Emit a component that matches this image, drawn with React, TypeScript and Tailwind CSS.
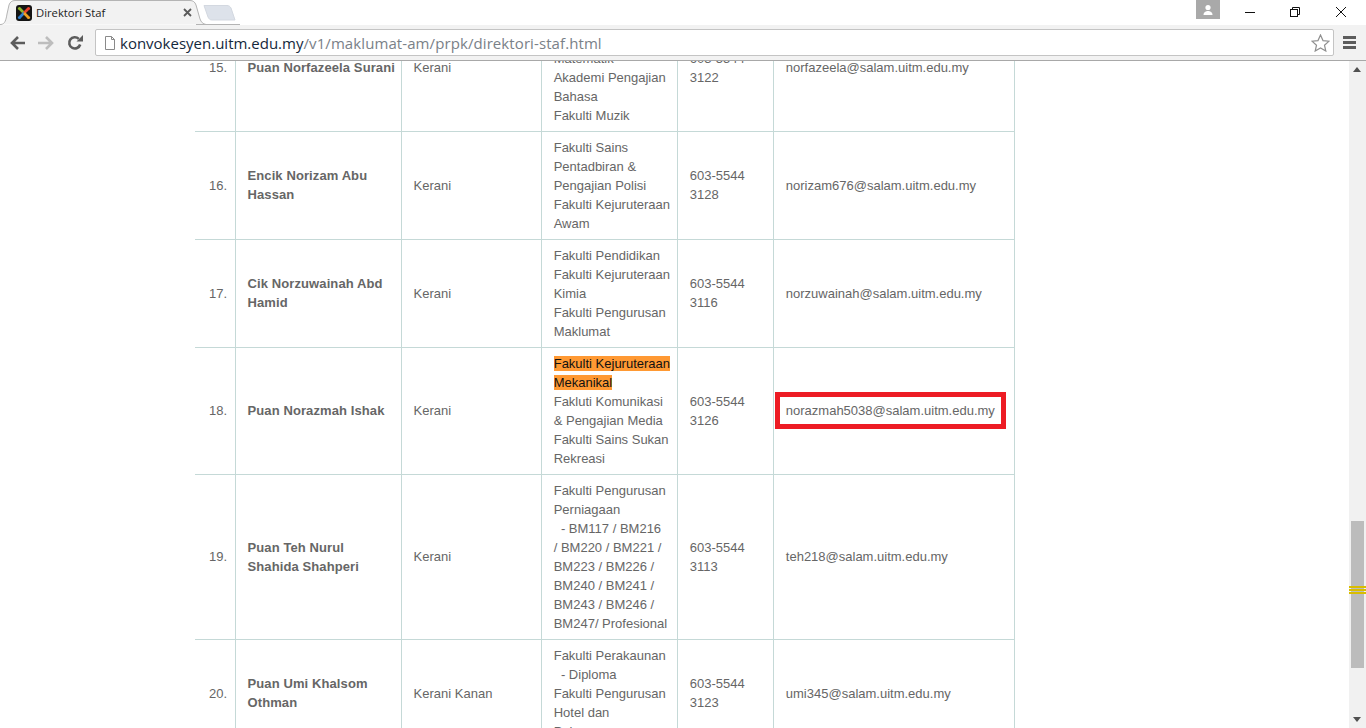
import React from "react";

// Directory rows, in the order they sit on the page.
const rows: {
  no: string;
  name: string[];
  role: string;
  faculty: React.ReactNode[];
  phone: string[];
  email: string;
  boxed?: boolean;
}[] = [
  {
    no: "15.",
    name: ["Puan Norfazeela Surani"],
    role: "Kerani",
    faculty: ["Fakulti Sains", "Komputer &", "Matematik", "Akademi Pengajian", "Bahasa", "Fakulti Muzik"],
    phone: ["603-5544", "3122"],
    email: "norfazeela@salam.uitm.edu.my",
  },
  {
    no: "16.",
    name: ["Encik Norizam Abu", "Hassan"],
    role: "Kerani",
    faculty: ["Fakulti Sains", "Pentadbiran &", "Pengajian Polisi", "Fakulti Kejuruteraan", "Awam"],
    phone: ["603-5544", "3128"],
    email: "norizam676@salam.uitm.edu.my",
  },
  {
    no: "17.",
    name: ["Cik Norzuwainah Abd", "Hamid"],
    role: "Kerani",
    faculty: ["Fakulti Pendidikan", "Fakulti Kejuruteraan", "Kimia", "Fakulti Pengurusan", "Maklumat"],
    phone: ["603-5544", "3116"],
    email: "norzuwainah@salam.uitm.edu.my",
  },
  {
    no: "18.",
    name: ["Puan Norazmah Ishak"],
    role: "Kerani",
    faculty: [
      <span className="bg-[#ff9933] text-[#111]">Fakulti Kejuruteraan</span>,
      <span className="bg-[#ff9933] text-[#111]">Mekanikal</span>,
      "Fakluti Komunikasi",
      "& Pengajian Media",
      "Fakulti Sains Sukan",
      "Rekreasi",
    ],
    phone: ["603-5544", "3126"],
    email: "norazmah5038@salam.uitm.edu.my",
    boxed: true,
  },
  {
    no: "19.",
    name: ["Puan Teh Nurul", "Shahida Shahperi"],
    role: "Kerani",
    faculty: [
      "Fakulti Pengurusan",
      "Perniagaan",
      "\u00a0\u00a0- BM117 / BM216",
      "/ BM220 / BM221 /",
      "BM223 / BM226 /",
      "BM240 / BM241 /",
      "BM243 / BM246 /",
      "BM247/ Profesional",
    ],
    phone: ["603-5544", "3113"],
    email: "teh218@salam.uitm.edu.my",
  },
  {
    no: "20.",
    name: ["Puan Umi Khalsom", "Othman"],
    role: "Kerani Kanan",
    faculty: ["Fakulti Perakaunan", "\u00a0\u00a0- Diploma", "Fakulti Pengurusan", "Hotel dan", "Pelancongan"],
    phone: ["603-5544", "3123"],
    email: "umi345@salam.uitm.edu.my",
  },
];

const cell = "border border-[#c5d9d7] px-3 pt-1.5 align-middle whitespace-nowrap";
// the extra bottom pixel makes half-pixel centring round upwards
const short = `${cell} pb-[7px]`;

function Lines({ items }: { items: React.ReactNode[] }) {
  return (
    <>
      {items.map((l, i) => (
        <div key={i}>{l}</div>
      ))}
    </>
  );
}

function Favicon() {
  return (
    <svg width="16" height="16" viewBox="0 0 16 16">
      <rect width="16" height="16" rx="3" fill="#141414" />
      <path d="M4 4 L8 8" stroke="#8fb52a" strokeWidth="2.6" />
      <path d="M12 4 L8 8" stroke="#e8412c" strokeWidth="2.6" />
      <path d="M4 12 L8 8" stroke="#2f7fd0" strokeWidth="2.6" />
      <path d="M12 12 L8 8" stroke="#f0a020" strokeWidth="2.6" />
      <circle cx="3.5" cy="3.5" r="1.6" fill="#8fb52a" />
      <circle cx="12.5" cy="3.5" r="1.6" fill="#e8412c" />
      <circle cx="3.5" cy="12.5" r="1.6" fill="#2f7fd0" />
      <circle cx="12.5" cy="12.5" r="1.6" fill="#f0a020" />
    </svg>
  );
}

function TabStrip() {
  return (
    <div className="relative h-[25px] bg-white">
      {/* tab shapes */}
      <svg className="absolute left-0 top-0" width="240" height="25" viewBox="0 0 240 25">
        <path d="M0 24.5 H1 C5 24 6 20 7 14 L9 5 C10 2 12 .5 15 .5 H190 C193 .5 195 2 196 5 L200 19 C201 22 203 24 206 24.5 H240" fill="#f2f2f2" stroke="#b4b4b4" />
        <path d="M204 5.5 H227 C229 5.5 230 6.5 231 8 L235 20 H212 C210 20 209 19 208 17 L204 5.5 Z" fill="#dde2ea" stroke="#d3d8e0" />
        <path d="M196 24.5 H1366" stroke="#b4b4b4" />
      </svg>
      <div className="absolute left-[16px] top-[5px]">
        <Favicon />
      </div>
      <span className="absolute left-[36px] top-[4px] text-[11.25px] leading-[17px] text-[#222] font-['Open_Sans',sans-serif]">
        Direktori Staf
      </span>
      <svg className="absolute left-[183px] top-[8px]" width="9" height="9" viewBox="0 0 9 9">
        <path d="M1 1 L8 8 M8 1 L1 8" stroke="#5a5a5a" strokeWidth="1.8" />
      </svg>
      <div className="absolute left-[1196px] top-0 flex h-[19px] w-[24px] items-center justify-center bg-[#a9a9a9]">
        <svg width="12" height="12" viewBox="0 0 12 12">
          <circle cx="6" cy="3.5" r="2.6" fill="#fff" />
          <path d="M1.5 11 C1.5 8 4 7 6 7 C8 7 10.5 8 10.5 11 Z" fill="#fff" />
        </svg>
      </div>
      <svg className="absolute left-[1245px] top-[12px]" width="10" height="1">
        <rect width="10" height="1" fill="#111" />
      </svg>
      <svg className="absolute left-[1290px] top-[7px]" width="10" height="10" viewBox="0 0 10 10" fill="none" stroke="#111">
        <path d="M2.5 2.5 V.5 H9.5 V7.5 H7.5" />
        <rect x=".5" y="2.5" width="7" height="7" />
      </svg>
      <svg className="absolute left-[1336px] top-[7px]" width="10" height="10" viewBox="0 0 10 10">
        <path d="M0 0 L10 10 M10 0 L0 10" stroke="#111" strokeWidth="1" />
      </svg>
    </div>
  );
}

function Toolbar() {
  return (
    <div className="flex h-[36px] items-center border-b border-[#a8a8a8] bg-[#f2f2f2]">
      <svg className="ml-[10px]" width="15" height="14" viewBox="0 0 15 14" fill="none" stroke="#5c5c5c" strokeWidth="2.6">
        <path d="M15 7 H2.5 M8 1 L2 7 L8 13" />
      </svg>
      <svg className="ml-[13px]" width="16" height="14" viewBox="0 0 16 14" fill="none" stroke="#bdbdbd" strokeWidth="2.6">
        <path d="M0 7 H13.5 M8 1 L14 7 L8 13" />
      </svg>
      <svg className="ml-[13px]" width="16" height="16" viewBox="0 0 16 16" fill="none">
        <path d="M13.2 9.5 A5.6 5.6 0 1 1 11.8 3.9" stroke="#5c5c5c" strokeWidth="2.6" />
        <path d="M9.5 6.5 H16 V0 Z" fill="#5c5c5c" />
      </svg>
      <div className="ml-[12px] flex h-[27px] w-[1239px] items-center rounded-[2px] border border-[#c4c4c4] bg-white">
        <svg className="ml-[8px]" width="12" height="14" viewBox="0 0 12 14" fill="none" stroke="#8a8a8a">
          <path d="M1.5 .5 H7.5 L10.5 3.5 V13.5 H1.5 Z M7.5 .5 V3.5 H10.5" />
        </svg>
        <span className="ml-[4px] whitespace-nowrap font-['Open_Sans',sans-serif] text-[15px] leading-[22px] tracking-[0.09px] text-[#7a8188]">
          <span className="tracking-normal text-[#14283c]">konvokesyen.uitm.edu.my</span>/v1/maklumat-am/prpk/direktori-staf.html
        </span>
        <svg className="ml-auto mr-[3px]" width="19" height="18" viewBox="0 0 19 18" fill="#fff" stroke="#8f8f8f" strokeWidth="1.2">
          <path d="M9.5 1 L12 6.6 L18 7.2 L13.5 11.2 L14.8 17 L9.5 14 L4.2 17 L5.5 11.2 L1 7.2 L7 6.6 Z" />
        </svg>
      </div>
      <div className="ml-[9px] flex flex-col gap-[2px]">
        <div className="h-[3px] w-[13px] bg-[#5c5c5c]" />
        <div className="h-[3px] w-[13px] bg-[#5c5c5c]" />
        <div className="h-[3px] w-[13px] bg-[#5c5c5c]" />
      </div>
    </div>
  );
}

function Scrollbar() {
  return (
    <div className="relative w-[17px] shrink-0 bg-[#f1f1f1]">
      <svg className="absolute left-[4px] top-[6px]" width="8" height="5" viewBox="0 0 8 5">
        <path d="M4 0 L8 5 H0 Z" fill="#505050" />
      </svg>
      <div className="absolute left-[2px] top-[460px] h-[147px] w-[13px] bg-[#bcbcbc]" />
      {/* find-in-page tick marks */}
      <div className="absolute left-0 top-[525px] flex h-[8px] w-[17px] flex-col justify-between">
        <div className="h-[2px] bg-[#d9bd00]" />
        <div className="h-[2px] bg-[#d9bd00]" />
        <div className="h-[2px] bg-[#d9bd00]" />
      </div>
      <svg className="absolute bottom-[6px] left-[4px]" width="8" height="5" viewBox="0 0 8 5">
        <path d="M0 0 H8 L4 5 Z" fill="#505050" />
      </svg>
    </div>
  );
}

export default function App() {
  return (
    <div className="flex h-[728px] w-[1366px] flex-col overflow-hidden bg-white font-['Liberation_Sans',Arial,sans-serif]">
      <TabStrip />
      <Toolbar />
      <div className="flex min-h-0 flex-1">
        <div className="min-w-0 flex-1 overflow-hidden pl-[195px]">
          <table className="mt-[-57px] w-[820px] table-fixed border-collapse text-[13px] leading-[19px] text-[#666]">
            <colgroup>
              <col className="w-[40px]" />
              <col className="w-[166px]" />
              <col className="w-[140px]" />
              <col className="w-[136px]" />
              <col className="w-[96px]" />
              <col className="w-[241px]" />
            </colgroup>
            <tbody>
              {rows.map((r) => (
                <tr key={r.no}>
                  <td className={`${short} border-l-0 pl-[14px] pr-0`}>{r.no}</td>
                  <td className={`${short} font-bold tracking-[0.1px]`}>
                    <Lines items={r.name} />
                  </td>
                  <td className={short}>{r.role}</td>
                  <td className={`${cell} pb-1.5`}>
                    <Lines items={r.faculty} />
                  </td>
                  <td className={short}>
                    <Lines items={r.phone} />
                  </td>
                  <td className={short}>
                    {r.boxed ? (
                      <div className="ml-[-11px] w-[231px] border-[5px] border-[#ed1c24] py-1 pl-[6px]">{r.email}</div>
                    ) : (
                      r.email
                    )}
                  </td>
                </tr>
              ))}
            </tbody>
          </table>
        </div>
        <Scrollbar />
      </div>
    </div>
  );
}
